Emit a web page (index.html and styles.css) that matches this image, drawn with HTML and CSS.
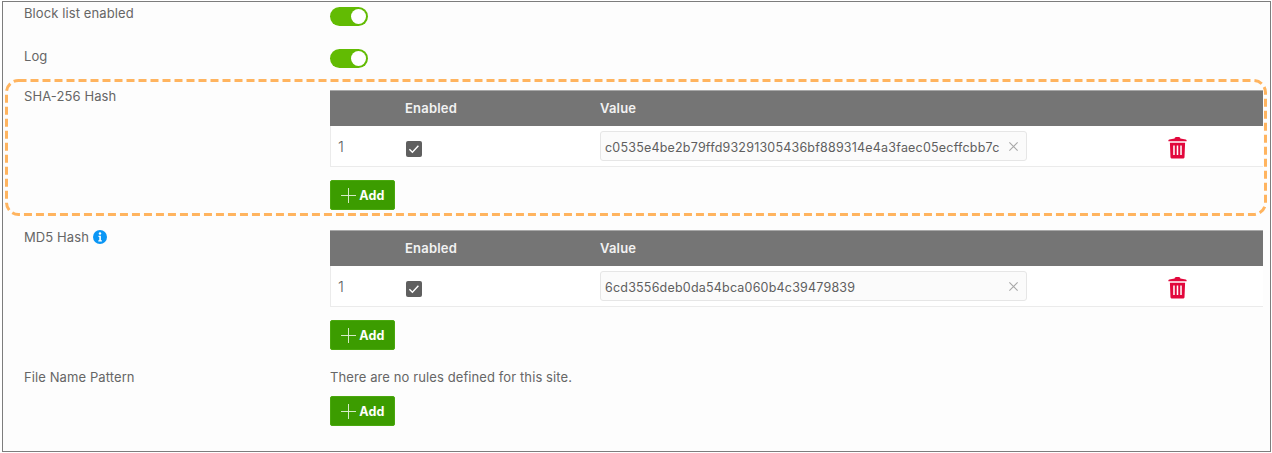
FILE: index.html
```html
<!DOCTYPE html>
<html lang="en">
<head>
<meta charset="utf-8">
<title>Block list</title>
<link rel="stylesheet" href="styles.css">
</head>
<body>
<main class="frame">
  <section class="row row-first">
    <div class="label">Block list enabled</div>
    <div class="field"><span class="toggle"><span class="knob"></span></span></div>
  </section>
  <section class="row row-second">
    <div class="label">Log</div>
    <div class="field"><span class="toggle"><span class="knob"></span></span></div>
  </section>
  <section class="row row-table">
    <div class="label">SHA-256 Hash</div>
    <div class="field">
      <div class="table">
        <div class="thead"><span class="c-num"></span><span class="c-en">Enabled</span><span class="c-val">Value</span></div>
        <div class="tbody">
          <span class="c-num num">1</span>
          <span class="c-en"><svg class="check" viewBox="0 0 16 16"><rect width="16" height="16" rx="2" fill="#5f5f5f"/><path d="M3.4 8.3l3 3 6-6.6" fill="none" stroke="#fff" stroke-width="1.4"/></svg></span>
          <span class="c-val"><span class="input"><span class="input-text">c0535e4be2b79ffd93291305436bf889314e4a3faec05ecffcbb7c</span><svg class="clear" viewBox="0 0 12 12"><path d="M1.5 1.5l9 9M10.5 1.5l-9 9" stroke="#a8a8a8" stroke-width="1.2" fill="none"/></svg></span></span>
          <svg class="trash" viewBox="0 0 20 24"><path d="M7 2.6C7 1.4 8 1 10 1s3 .4 3 1.6l5.6.9c.8.1 1 .6 1 1.4v.6H.4v-.6c0-.8.2-1.300 1-1.400z" fill="#e2083c"/><path fill-rule="evenodd" d="M2 7h16l-.6 15c0 1-.7 1.600-1.700 1.600H4.300c-1 0-1.700-.6-1.700-1.600zM5.500 10v10h1.600V10zm3.700 0v10h1.600V10zm3.700 0v10h1.600V10z" fill="#e2083c"/></svg>
        </div>
      </div>
      <button class="add" type="button"><svg class="plus" viewBox="0 0 16 16"><path d="M8 0v16M0 8h16" stroke="#dff0d4" stroke-width="1"/></svg>Add</button>
    </div>
  </section>
  <section class="row row-table">
    <div class="label label-md5">MD5 Hash <svg class="info" viewBox="0 0 14 14"><circle cx="7" cy="7" r="7" fill="#0a96f5"/><circle cx="7" cy="3.500" r="1.200" fill="#fff"/><path d="M5.500 5.800h2.400v4.400h1v1.200H5.300v-1.200h1V7H5.500z" fill="#fff"/></svg></div>
    <div class="field">
      <div class="table">
        <div class="thead"><span class="c-num"></span><span class="c-en">Enabled</span><span class="c-val">Value</span></div>
        <div class="tbody">
          <span class="c-num num">1</span>
          <span class="c-en"><svg class="check" viewBox="0 0 16 16"><rect width="16" height="16" rx="2" fill="#5f5f5f"/><path d="M3.4 8.3l3 3 6-6.6" fill="none" stroke="#fff" stroke-width="1.4"/></svg></span>
          <span class="c-val"><span class="input"><span class="input-text">6cd3556deb0da54bca060b4c39479839</span><svg class="clear" viewBox="0 0 12 12"><path d="M1.5 1.5l9 9M10.5 1.5l-9 9" stroke="#a8a8a8" stroke-width="1.2" fill="none"/></svg></span></span>
          <svg class="trash" viewBox="0 0 20 24"><path d="M7 2.6C7 1.4 8 1 10 1s3 .4 3 1.6l5.6.9c.8.1 1 .6 1 1.4v.6H.4v-.6c0-.8.2-1.300 1-1.400z" fill="#e2083c"/><path fill-rule="evenodd" d="M2 7h16l-.6 15c0 1-.7 1.600-1.700 1.600H4.300c-1 0-1.700-.6-1.700-1.600zM5.500 10v10h1.600V10zm3.700 0v10h1.600V10zm3.700 0v10h1.600V10z" fill="#e2083c"/></svg>
        </div>
      </div>
      <button class="add" type="button"><svg class="plus" viewBox="0 0 16 16"><path d="M8 0v16M0 8h16" stroke="#dff0d4" stroke-width="1"/></svg>Add</button>
    </div>
  </section>
  <section class="row row-empty">
    <div class="label">File Name Pattern</div>
    <div class="field">
      <p class="empty">There are no rules defined for this site.</p>
      <button class="add" type="button"><svg class="plus" viewBox="0 0 16 16"><path d="M8 0v16M0 8h16" stroke="#dff0d4" stroke-width="1"/></svg>Add</button>
    </div>
  </section>
  <svg class="callout" width="1262" height="138" viewBox="0 0 1262 138"><rect x="1.500" y="1.500" width="1259" height="134" rx="12" fill="none" stroke="#ffb45f" stroke-width="3" stroke-dasharray="8 4"/></svg>
</main>
</body>
</html>
```

FILE: styles.css
```css
* { box-sizing: border-box; }
html, body { margin: 0; padding: 0; background: #fff; }
body { font-family: "Inter", "Noto Sans", sans-serif; color: #5f5f5f; width: 1272px; height: 453px; overflow: hidden; }

.frame {
  position: relative;
  margin: 1px 0 0 2px;
  width: 1269px;
  height: 451px;
  border: 1px solid #7d7d7d;
  background: #fdfdfd;
  padding-left: 21px;
}

.row { display: flex; }
.label { width: 306px; flex: none; font-size: 13px; line-height: 18px; letter-spacing: .1px; color: #666; }
.field { flex: none; width: 933px; }

.row-first { height: 47px; padding-top: 2px; }
.row-first .field { padding-top: 3px; }
.row-second { height: 42px; }
.row-second .label { margin-top: -2px; }
.row-table { height: 140px; }
.row-table .label { margin-top: -4px; }
.row-table .label-md5 { margin-top: -3px; }

.toggle { display: block; width: 38px; height: 19px; border-radius: 10px; background: #62bb03; position: relative; }
.knob { position: absolute; right: 2px; top: 2px; width: 15px; height: 15px; border-radius: 50%; background: #fff; }

.thead { height: 35px; padding-bottom: 1px; background: #757575; color: #f2f2f2; font-size: 13px; font-weight: 600; letter-spacing: .2px; display: flex; align-items: center; box-shadow: 0 -1px 0 #a8a8a8; }
.tbody { height: 41px; background: #fff; display: flex; align-items: center; border: 1px solid #ebebeb; border-top: 0; border-right: 0; position: relative; }
.c-num { width: 75px; padding-left: 7px; flex: none; }
.tbody .c-num { width: 74px; }
.c-en { width: 195px; flex: none; display: flex; align-items: center; }
.c-val { flex: none; }
.num { font-size: 15px; font-weight: 300; color: #5f5f5f; }
.check { width: 16px; height: 16px; display: block; margin: 5px 0 0 1px; }

.input { display: flex; align-items: center; width: 427px; height: 30px; border: 1px solid #e6e6e6; border-radius: 3px; background: #fbfbfb; padding-left: 4px; }
.input-text { width: 394px; flex: none; padding-top: 2px; font-size: 12.500px; letter-spacing: .2px; white-space: nowrap; color: #5f5f5f; }
.clear { width: 11px; height: 11px; margin-left: 9px; flex: none; }
.trash { position: absolute; left: 837px; top: 10px; width: 19px; height: 23px; }

.add {
  display: flex; align-items: center; justify-content: center; gap: 3px;
  width: 65px; height: 30px; margin-top: 13px; padding: 0 0 0 1px;
  border: 1px solid #4aa80e; border-radius: 2px;
  background: #3c9c00; color: #fff;
  font-family: inherit; font-size: 12.500px; font-weight: 700; letter-spacing: .2px;
}
.plus { width: 15px; height: 15px; }
.info { width: 14px; height: 14px; vertical-align: -2px; }

.row-empty .label { margin-top: -3px; }
.row-empty .field { margin-top: -3px; }
.empty { margin: 0; font-size: 13px; line-height: 18px; letter-spacing: .1px; color: #666; }
.row-empty .add { margin-top: 10px; }

.callout { position: absolute; left: 2px; top: 77px; pointer-events: none; }
```
